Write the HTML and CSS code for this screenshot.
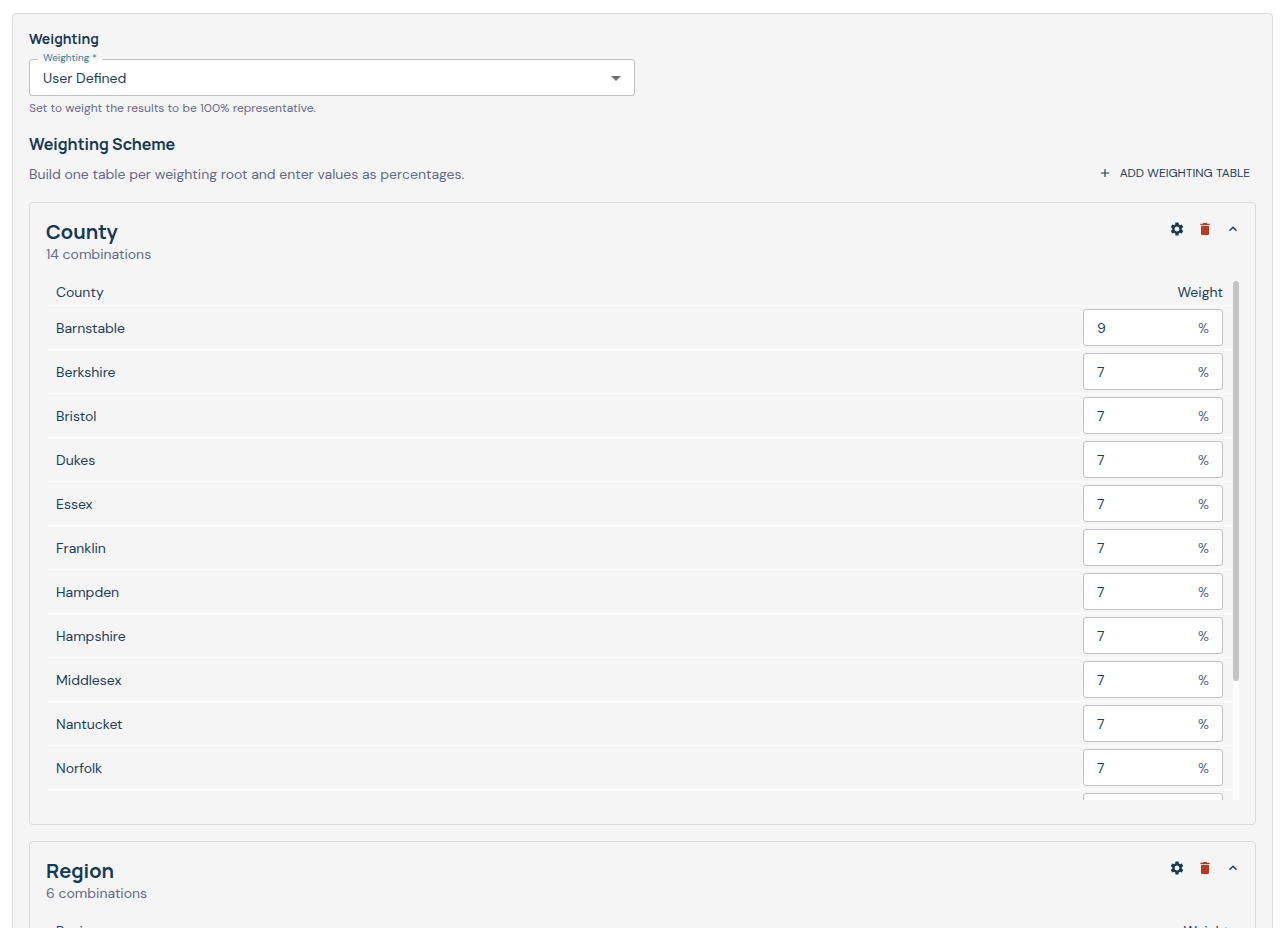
FILE: index.html
```html
<!DOCTYPE html>
<html lang="en">
<head>
    <meta charset="UTF-8">
    <meta name="viewport" content="width=device-width, initial-scale=1.0">
    <title>Weighting</title>
    <link rel="stylesheet" href="styles.css">
</head>
<body>
<svg class="sprite" aria-hidden="true">
    <symbol id="icon-settings" viewBox="0 0 24 24">
        <path d="M19.14 12.94c.04-.3.06-.61.06-.94 0-.32-.02-.64-.07-.94l2.03-1.58c.18-.14.23-.41.12-.61l-1.92-3.32c-.12-.22-.37-.29-.59-.22l-2.39.96c-.5-.38-1.03-.7-1.62-.94l-.36-2.54c-.04-.24-.24-.41-.48-.41h-3.84c-.24 0-.43.17-.47.41l-.36 2.54c-.59.24-1.13.57-1.62.94l-2.39-.96c-.22-.08-.47 0-.59.22L2.74 8.87c-.12.21-.08.47.12.61l2.03 1.58c-.05.3-.09.63-.09.94s.02.64.07.94l-2.03 1.58c-.18.14-.23.41-.12.61l1.92 3.32c.12.22.37.29.59.22l2.39-.96c.5.38 1.03.7 1.62.94l.36 2.54c.05.24.24.41.48.41h3.84c.24 0 .44-.17.47-.41l.36-2.54c.59-.24 1.13-.56 1.62-.94l2.39.96c.22.08.47 0 .59-.22l1.92-3.32c.12-.22.07-.47-.12-.61l-2.01-1.58zM12 15.6c-1.98 0-3.6-1.62-3.6-3.6s1.62-3.6 3.6-3.6 3.6 1.62 3.6 3.6-1.62 3.6-3.6 3.6z"/>
    </symbol>
    <symbol id="icon-delete" viewBox="0 0 24 24">
        <path d="M6 19c0 1.100.9 2 2 2h8c1.100 0 2-.9 2-2V7H6v12zM19 4h-3.500l-1-1h-5l-1 1H5v2h14V4z"/>
    </symbol>
    <symbol id="icon-collapse" viewBox="0 0 24 24">
        <path d="m12 8-6 6 1.410 1.410L12 10.830l4.590 4.580L18 14z"/>
    </symbol>
    <symbol id="icon-add" viewBox="0 0 24 24">
        <path d="M19 13h-6v6h-2v-6H5v-2h6V5h2v6h6v2z"/>
    </symbol>
</svg>
<main class="panel">
    <h3 class="section-label">Weighting</h3>
    <div class="field-row">
        <div class="field">
            <div class="select-box">
                <label for="weighting">Weighting *</label>
                <select id="weighting" required>
                    <option>User Defined</option>
                </select>
            </div>
            <p class="helper">Set to weight the results to be 100% representative.</p>
        </div>
    </div>

    <h2 class="scheme-title">Weighting Scheme</h2>
    <div class="scheme-bar">
        <p>Build one table per weighting root and enter values as percentages.</p>
        <button type="button" class="add-button">
            <svg><use href="#icon-add"/></svg>
            <span>ADD WEIGHTING TABLE</span>
        </button>
    </div>

    <section class="card">
        <header class="card-header">
            <div>
                <h2>County</h2>
                <p>14 combinations</p>
            </div>
            <div class="actions">
                <button type="button" aria-label="Settings"><svg><use href="#icon-settings"/></svg></button>
                <button type="button" class="delete" aria-label="Delete"><svg><use href="#icon-delete"/></svg></button>
                <button type="button" aria-label="Collapse"><svg><use href="#icon-collapse"/></svg></button>
            </div>
        </header>
        <div class="table-wrap">
            <div class="table-scroll">
                <table>
                    <thead>
                        <tr><th>County</th><th class="weight">Weight</th></tr>
                    </thead>
                    <tbody>
                        <tr><td><label for="w1">Barnstable</label></td><td><div class="percent"><input type="number" id="w1" value="9"><span>%</span></div></td></tr>
                        <tr><td><label for="w2">Berkshire</label></td><td><div class="percent"><input type="number" id="w2" value="7"><span>%</span></div></td></tr>
                        <tr><td><label for="w3">Bristol</label></td><td><div class="percent"><input type="number" id="w3" value="7"><span>%</span></div></td></tr>
                        <tr><td><label for="w4">Dukes</label></td><td><div class="percent"><input type="number" id="w4" value="7"><span>%</span></div></td></tr>
                        <tr><td><label for="w5">Essex</label></td><td><div class="percent"><input type="number" id="w5" value="7"><span>%</span></div></td></tr>
                        <tr><td><label for="w6">Franklin</label></td><td><div class="percent"><input type="number" id="w6" value="7"><span>%</span></div></td></tr>
                        <tr><td><label for="w7">Hampden</label></td><td><div class="percent"><input type="number" id="w7" value="7"><span>%</span></div></td></tr>
                        <tr><td><label for="w8">Hampshire</label></td><td><div class="percent"><input type="number" id="w8" value="7"><span>%</span></div></td></tr>
                        <tr><td><label for="w9">Middlesex</label></td><td><div class="percent"><input type="number" id="w9" value="7"><span>%</span></div></td></tr>
                        <tr><td><label for="w10">Nantucket</label></td><td><div class="percent"><input type="number" id="w10" value="7"><span>%</span></div></td></tr>
                        <tr><td><label for="w11">Norfolk</label></td><td><div class="percent"><input type="number" id="w11" value="7"><span>%</span></div></td></tr>
                        <tr><td><label for="w12">Plymouth</label></td><td><div class="percent"><input type="number" id="w12" value="7"><span>%</span></div></td></tr>
                    </tbody>
                </table>
            </div>
            <div class="scroll-track"><div class="scroll-thumb"></div></div>
        </div>
    </section>

    <section class="card">
        <header class="card-header">
            <div>
                <h2>Region</h2>
                <p>6 combinations</p>
            </div>
            <div class="actions">
                <button type="button" aria-label="Settings"><svg><use href="#icon-settings"/></svg></button>
                <button type="button" class="delete" aria-label="Delete"><svg><use href="#icon-delete"/></svg></button>
                <button type="button" aria-label="Collapse"><svg><use href="#icon-collapse"/></svg></button>
            </div>
        </header>
        <div class="table-wrap">
            <div class="table-scroll">
                <table>
                    <thead>
                        <tr><th>Region</th><th class="weight">Weight</th></tr>
                    </thead>
                </table>
            </div>
        </div>
    </section>
</main>
</body>
</html>
```
FILE: styles.css
```css
* {
    margin: 0;
    padding: 0;
    box-sizing: border-box;
}

body {
    height: 100vh;
    overflow: hidden;
    padding: 13px 10px 0 12px;
    background-color: #fff;
    color: #1b3f5c;
    font-family: 'DM Sans', Inter, 'Open Sans', sans-serif;
    font-size: 14px;
    line-height: 20px;
}

button, input, select {
    font: inherit;
    color: inherit;
    border: none;
    background: none;
}

button {
    cursor: pointer;
}

svg {
    display: block;
    width: 16px;
    height: 16px;
    fill: currentColor;
}

.sprite {
    display: none;
}

.panel {
    padding: 16px;
    background-color: #f5f5f5;
    border: 1px solid #d9dddd;
    border-radius: 4px;
}

h2, h3 {
    color: #163a56;
    font-family: Manrope, Inter, sans-serif;
    font-weight: 700;
}

.section-label {
    margin-bottom: 11px;
    font-size: 14px;
    line-height: 18px;
}

.field-row {
    display: grid;
    grid-template-columns: 1fr 1fr;
    gap: 16px;
}

.select-box {
    position: relative;
}

.select-box label {
    position: absolute;
    top: -8px;
    left: 9px;
    padding: 0 5px;
    background: linear-gradient(#f5f5f5 60%, #fff 60%);
    color: #2f80a8;
    font-size: 10px;
    line-height: 13px;
}

.select-box::after {
    content: '';
    position: absolute;
    top: 17px;
    right: 14px;
    border: 5px solid transparent;
    border-top-color: #707070;
    border-bottom: none;
    pointer-events: none;
}

select {
    display: block;
    width: 100%;
    height: 37px;
    padding: 0 32px 0 13px;
    appearance: none;
    background-color: #fff;
    border: 1px solid #c2c2c2;
    border-radius: 3px;
}

.helper {
    margin-top: 4px;
    color: #64698a;
    font-size: 12px;
    line-height: 16px;
}

.scheme-title {
    margin-top: 16px;
    font-size: 16px;
    line-height: 24px;
}

.scheme-bar {
    display: flex;
    justify-content: space-between;
    align-items: center;
    margin: 2px 0 14px;
    color: #64698a;
}

.scheme-bar p {
    padding-top: 2px;
}

.add-button {
    display: flex;
    align-items: center;
    gap: 8px;
    padding: 5px 6px;
    color: #1b3f5c;
    font-size: 12px;
}

.add-button svg {
    width: 14px;
    height: 14px;
}

.card {
    padding: 16px 16px 24px;
    border: 1px solid #d9dddd;
    border-radius: 4px;
}

.card + .card {
    margin-top: 16px;
}

.card-header {
    display: flex;
    justify-content: space-between;
    align-items: flex-start;
    margin-bottom: 18px;
}

.card-header h2 {
    font-size: 20px;
    line-height: 26px;
}

.card-header p {
    color: #64698a;
    line-height: 18px;
}

.actions {
    display: flex;
    margin: -4px -8px 0 0;
    color: #163a56;
}

.actions button {
    padding: 6px;
}

.actions .delete {
    color: #b93a1e;
}

.table-wrap {
    display: flex;
    max-height: 519px;
}

.table-scroll {
    flex: 1;
    overflow-y: auto;
    scrollbar-width: none;
}

.scroll-track {
    width: 6px;
    background-color: #fff;
}

.scroll-thumb {
    height: 77%;
    background-color: #c4c4c4;
    border-radius: 3px;
}

table {
    width: 100%;
    border-collapse: separate;
    border-spacing: 0;
}

th, td {
    padding: 3px 10px;
    border-bottom: 1px solid #fcfcfc;
    text-align: left;
}

th {
    padding: 1px 10px 3px;
    font-weight: 400;
}

th.weight {
    text-align: right;
}

.percent {
    display: flex;
    align-items: center;
    width: 140px;
    height: 37px;
    margin-left: auto;
    padding: 0 13px;
    background-color: #fff;
    border: 1px solid #c2c2c2;
    border-radius: 3px;
}

.percent input {
    flex: 1;
    min-width: 0;
    outline: none;
    appearance: textfield;
}

.percent input::-webkit-inner-spin-button {
    appearance: none;
}

.percent span {
    color: #64698a;
}
```
